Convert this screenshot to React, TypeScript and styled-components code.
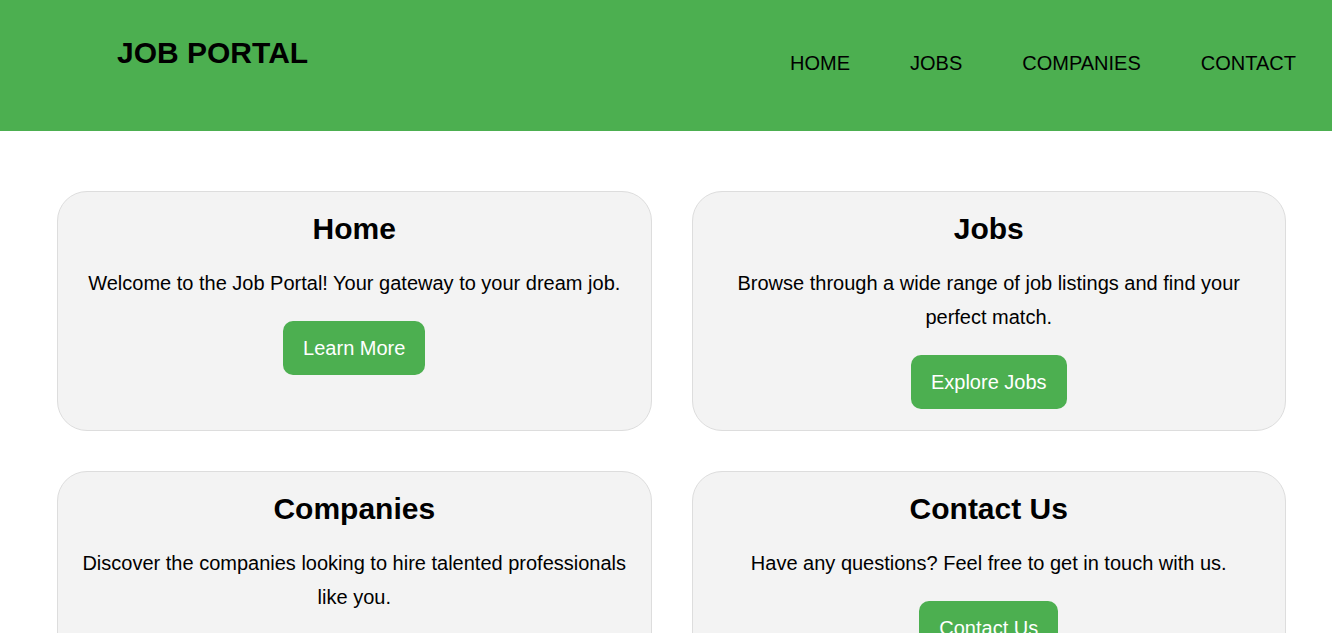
import React from "react";
import styled, { createGlobalStyle } from "styled-components";

const GlobalStyle = createGlobalStyle`
  * { box-sizing: border-box; }
  body {
    margin: 0;
    background: #fff;
    color: #000;
    font-family: Arial, "Liberation Sans", sans-serif;
    font-size: 20px;
  }
`;

const Header = styled.header`
  display: flex;
  justify-content: space-between;
  min-height: 131px;
  padding: 34px 36px 32px 117px;
  background: #4caf50;
`;

const Brand = styled.h1`
  margin: 0;
  font-size: 30px;
  line-height: 38px;
`;

const Nav = styled.nav`
  display: flex;
  gap: 60px;
  padding-top: 17px;
`;

const NavLink = styled.a`
  color: #000;
  line-height: 24px;
  text-decoration: none;
`;

const Grid = styled.main`
  display: grid;
  grid-template-columns: 1fr 1fr;
  gap: 40px;
  padding: 60px 46px 60px 57px;
`;

const Card = styled.section`
  display: flex;
  flex-direction: column;
  align-items: center;
  padding: 19px 20px 21px;
  border: 1px solid #ddd;
  border-radius: 30px;
  background: #f3f3f3;
  text-align: center;
`;

const CardTitle = styled.h2`
  margin: 0 0 20px;
  font-size: 30px;
  line-height: 35px;
`;

const CardText = styled.p`
  margin: 0 0 21px;
  line-height: 34px;
`;

const ActionButton = styled.button`
  padding: 10px 20px;
  border: 0;
  border-radius: 10px;
  background: #4caf50;
  color: #fff;
  font: inherit;
  line-height: 34px;
  cursor: pointer;
`;

const links = ["HOME", "JOBS", "COMPANIES", "CONTACT"];

const cards = [
  { title: "Home", text: "Welcome to the Job Portal! Your gateway to your dream job.", action: "Learn More" },
  { title: "Jobs", text: "Browse through a wide range of job listings and find your perfect match.", action: "Explore Jobs" },
  { title: "Companies", text: "Discover the companies looking to hire talented professionals like you.", action: "View Companies" },
  { title: "Contact Us", text: "Have any questions? Feel free to get in touch with us.", action: "Contact Us" },
];

export default function App() {
  return (
    <>
      <GlobalStyle />
      <Header>
        <Brand>JOB PORTAL</Brand>
        <Nav>
          {links.map((link) => (
            <NavLink key={link} href={`#${link.toLowerCase()}`}>{link}</NavLink>
          ))}
        </Nav>
      </Header>
      <Grid>
        {cards.map((card) => (
          <Card key={card.title}>
            <CardTitle>{card.title}</CardTitle>
            <CardText>{card.text}</CardText>
            <ActionButton type="button">{card.action}</ActionButton>
          </Card>
        ))}
      </Grid>
    </>
  );
}
